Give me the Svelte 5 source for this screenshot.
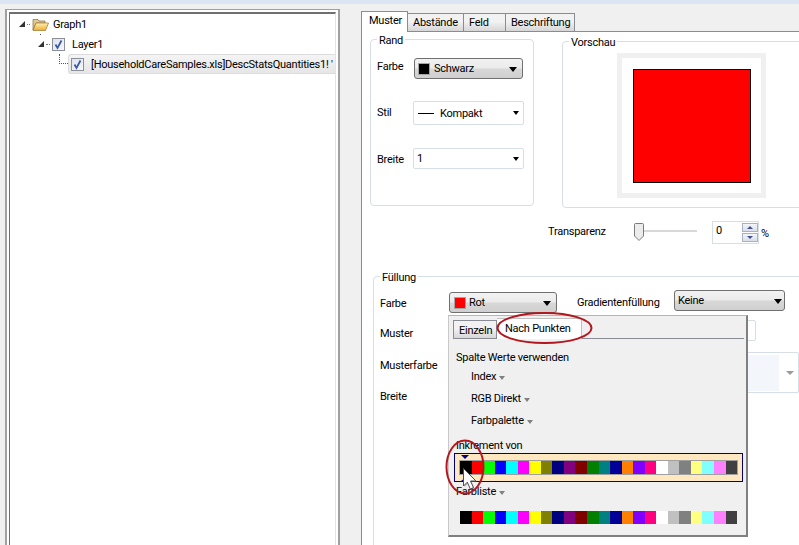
<script>
  const palette = ['#000000','#ff0000','#00ff00','#0000ff','#00ffff','#ff00ff','#ffff00','#808000','#000080','#800080','#800000','#008000','#008080','#000099','#ff8000','#8000ff','#ff0080','#ffffff','#c0c0c0','#808080','#ffff80','#80ffff','#ff80ff','#404040'];
</script>

<div class="app">
  <div class="strip"></div>
  <div class="main">
    <section class="tree-outer">
      <div class="tree">
        <i class="stub"></i>
        <div class="node n1">
          <svg class="exp" viewBox="0 0 6 6"><polygon points="6,0 6,6 0,6" fill="#333"/></svg>
          <span class="dots d1"></span>
          <svg class="folder" viewBox="0 0 17 13">
            <defs><linearGradient id="fg" x1="0" y1="0" x2="0" y2="1"><stop offset="0" stop-color="#fff2b0"/><stop offset="1" stop-color="#eeac34"/></linearGradient></defs>
            <path d="M1 12V1.500h5l1 1.500h6v2H4L1 12z" fill="#e3c98c" stroke="#8d7a55" stroke-width=".8"/>
            <path d="M1 12.500 4 5h12.500l-3 7.500z" fill="url(#fg)" stroke="#a5803a" stroke-width=".8"/>
          </svg>
          <span class="t1">Graph1</span>
        </div>
        <div class="node n2">
          <svg class="exp" viewBox="0 0 6 6"><polygon points="6,0 6,6 0,6" fill="#333"/></svg>
          <span class="dots d2"></span>
          <span class="cb"><svg viewBox="0 0 11 11"><path d="M2.500 5.500 4.500 9 8.500 1.500" fill="none" stroke="#3c5aa8" stroke-width="1.800"/></svg></span>
          <span class="t2">Layer1</span>
        </div>
        <div class="node n3">
          <span class="elbow"></span>
          <div class="selected">
            <span class="cb"><svg viewBox="0 0 11 11"><path d="M2.500 5.500 4.500 9 8.500 1.500" fill="none" stroke="#3c5aa8" stroke-width="1.800"/></svg></span>
            <span class="t3">[HouseholdCareSamples.xls]DescStatsQuantities1! '</span>
          </div>
        </div>
      </div>
    </section>

    <section class="right">
      <div class="tabs">
        <div class="tab active w1">Muster</div>
        <div class="tab w2">Abstände</div>
        <div class="tab w3">Feld</div>
        <div class="tab w4">Beschriftung</div>
      </div>
      <div class="page">
        <div class="top">
          <div class="group rand">
            <div class="legend">Rand</div>
            <div class="r r1"><span class="lab">Farbe</span>
              <div class="btn b-schwarz"><i class="sw black"></i><span>Schwarz</span><b class="arrow"></b></div></div>
            <div class="r r2"><span class="lab">Stil</span>
              <div class="combo c-stil"><i class="dash"></i><span>Kompakt</span><b class="arrow sm"></b></div></div>
            <div class="r r3"><span class="lab">Breite</span>
              <div class="combo c-breite"><span>1</span><b class="arrow sm"></b></div></div>
          </div>
          <div class="group vorschau">
            <div class="legend">Vorschau</div>
            <div class="frame"><div class="redbox"></div></div>
          </div>
        </div>

        <div class="trans">
          <span class="tlabel">Transparenz</span>
          <div class="slider"><i class="track"></i><svg class="thumb" viewBox="0 0 10 18"><path d="M.5 1.500Q.5.500 1.500.500h7q1 0 1 1V13L5 17.500.5 13z" fill="#ececec" stroke="#7b7b7b"/></svg></div>
          <div class="spin"><span>0</span><div class="spinbtns"><i class="up"></i><i class="down"></i></div></div>
          <span class="pct">%</span>
        </div>

        <div class="group fill">
          <div class="legend">Füllung</div>
          <div class="fr fr1">
            <span class="flab">Farbe</span>
            <div class="btn b-rot"><i class="sw red"></i><span>Rot</span><b class="arrow"></b></div>
            <span class="glab">Gradientenfüllung</span>
            <div class="btn b-keine"><span>Keine</span><b class="arrow"></b></div>
          </div>
          <div class="fr fr2"><span class="flab">Muster</span><div class="combo c-muster"></div></div>
          <div class="fr fr3"><span class="flab">Musterfarbe</span><div class="combo c-mf"><i class="mfi"></i><b class="arrow sm grey"></b></div></div>
          <div class="fr fr4"><span class="flab">Breite</span></div>
        </div>
      </div>
    </section>
  </div>

  <div class="popup">
    <div class="ptabs">
      <div class="ptab">Einzeln</div>
      <div class="ptab on">Nach Punkten</div>
    </div>
    <div class="pbody">
      <div class="ph">Spalte Werte verwenden</div>
      <div class="pi p1">Index<b class="arrow tiny"></b></div>
      <div class="pi p2">RGB Direkt<b class="arrow tiny"></b></div>
      <div class="pi p3">Farbpalette<b class="arrow tiny"></b></div>
      <div class="ph inc">Inkrement von</div>
      <div class="sel">
        <i class="mark top-m"></i>
        <div class="swatches framed">
          {#each palette as c}<i style="background:{c}"></i>{/each}
        </div>
        <i class="mark bot-m"></i>
      </div>
      <div class="ph fl">Farbliste<b class="arrow tiny"></b></div>
      <div class="swatches plain">
        {#each palette as c}<i style="background:{c}"></i>{/each}
      </div>
    </div>
  </div>

  <svg class="marks" viewBox="0 0 799 545" aria-hidden="true">
    <ellipse cx="544.500" cy="328" rx="47" ry="15" fill="none" stroke="#b4161e" stroke-width="2"/>
    <ellipse cx="465" cy="467" rx="18.500" ry="26.500" fill="none" stroke="#b4161e" stroke-width="2"/>
    <path d="M464.500 469.500V487l3.800-3.800 3 6.800 3.200-1.400-3-6.600h5.500z" fill="#666" opacity=".45"/>
    <path d="M463.500 468.500V486l3.800-3.800 3 6.800 3.200-1.400-3-6.600h5.500z" fill="#fff" stroke="#505050" stroke-width="1"/>
  </svg>
</div>

<style>
  :global(body) { margin: 0; }
  .app {
    position: relative; width: 799px; height: 545px; overflow: hidden;
    background: #f0f0f0; color: #000;
    font: 11px/15px Roboto, "Noto Sans", sans-serif; letter-spacing: -.25px;
  }
  .strip { height: 4px; background: #dce6f3; }
  .main { display: flex; align-items: flex-start; }
  i, b { display: block; }

  .tree-outer {
    margin: 5px 0 0 5px; width: 327px; height: 560px; flex: none;
    border: 1px solid #a0a0a0; border-width: 1px 2px 0 2px; background: #fff; padding: 2px 2px 0 2px;
  }
  .tree {
    position: relative;
    height: 100%; border: solid #6f6f6f; border-width: 2px 0 0 1px; border-right: 1px solid #e3e3e3;
    overflow: hidden; box-sizing: border-box;
  }
  .stub { position: absolute; left: 30px; top: 20px; width: 1px; height: 1px; background: #555; }
  .node { display: flex; align-items: center; white-space: nowrap; }
  .exp { width: 6px; height: 6px; flex: none; }
  .dots { height: 0; border-top: 1px dotted #777; flex: none; }
  .n1 { height: 20px; padding-left: 9px; }
  .n1 .dots { width: 3px; margin: 0 2px; }
  .folder { width: 17px; height: 13px; flex: none; }
  .t1 { margin-left: 4px; }
  .n2 { height: 20px; padding-left: 28px; }
  .n2 .dots { width: 4px; margin: 0 2px; }
  .cb {
    width: 11px; height: 11px; flex: none; border: 1px solid #8a8f98;
    background: linear-gradient(135deg, #dfe3ea, #f6f7f9); display: block;
  }
  .cb svg { display: block; width: 11px; height: 11px; }
  .t2 { margin-left: 7px; }
  .n3 { height: 20px; padding-left: 49px; align-items: stretch; }
  .elbow { width: 9px; height: 10px; border: dotted #555; border-width: 0 0 1px 1px; flex: none; box-sizing: border-box; }
  .selected {
    flex: 1; display: flex; align-items: center; padding-left: 2px; overflow: hidden;
    background: linear-gradient(#f4f4f4, #e6e6e6); border: 1px solid #dcdcdc; border-right: 0; border-radius: 3px 0 0 3px;
  }
  .t3 { margin-left: 7px; }

  .right { margin-left: 21px; width: 470px; flex: none; }
  .tabs { display: flex; height: 27px; box-sizing: border-box; padding-top: 7px; position: relative; z-index: 1; }
  .tab {
    box-sizing: border-box; height: 18px; margin-top: 2px; border: 1px solid #898c95; border-bottom: 0; border-left-width: 0;
    background: linear-gradient(#f2f2f2 45%, #d6d6d6); padding-left: 5px; line-height: 18px;
  }
  .tab.active { height: 21px; margin-top: 0; background: #fff; border-left-width: 1px; padding-left: 7px; line-height: 18px; }
  .w1 { width: 47px; } .w2 { width: 56px; } .w3 { width: 42px; } .w4 { width: 69px; }
  .page { border: solid #898c95; border-width: 1px 0 0 1px; background: #fff; height: 520px; box-sizing: border-box; padding: 7px 0 0 8px; }

  .top { display: flex; align-items: flex-start; }
  .group { border: 1px solid #d5dfe5; border-radius: 4px; box-sizing: border-box; }
  .legend { width: fit-content; height: 16px; margin: -8px 0 0 0; padding: 0 2px; background: #fff; line-height: 18px; }
  .rand { width: 164px; height: 167px; flex: none; padding-left: 6px; }
  .r { display: flex; align-items: center; }
  .lab { width: 36px; flex: none; }
  .r1 { height: 21px; margin-top: 10px; }
  .r1 .lab { margin-bottom: 4px; }
  .r2 { height: 24px; margin-top: 22px; }
  .r2 .lab { margin-bottom: 2px; }
  .r3 { height: 21px; margin-top: 23px; }
  .r3 .lab { margin-top: 2px; }

  .btn {
    box-sizing: border-box; height: 21px; display: flex; align-items: center; position: relative;
    border: 1px solid #707070; border-radius: 3px;
    background: linear-gradient(#f2f2f2 0, #ebebeb 48%, #d8d8d8 52%, #cfcfcf);
  }
  .combo {
    box-sizing: border-box; display: flex; align-items: center; position: relative;
    border: 1px solid #d5dfe5; border-radius: 2px; background: #fff;
  }
  .arrow { position: absolute; right: 5px; top: 50%; margin-top: -2px; width: 0; height: 0; border: 4.500px solid transparent; border-top: 5px solid #000; border-bottom: 0; }
  .arrow.sm { border-width: 4px 3.500px 0; right: 4px; border-top-color: #000; border-left-color: transparent; border-right-color: transparent; }
  .arrow.grey { border-top-color: #9a9a9a; border-width: 4px 4px 0; }
  .arrow.tiny { position: static; display: inline-block; margin: 0 0 0 3px; vertical-align: 0; border-width: 4px 3.500px 0; border-top-color: #808080; }
  .sw { box-sizing: border-box; width: 12px; height: 12px; flex: none; border: 1px solid #a5a5a5; }
  .sw.black { background: #000; }
  .sw.red { background: #f00; }
  .b-schwarz { width: 109px; margin-left: 1px; padding-left: 3px; }
  .b-schwarz span { margin-left: 4px; }
  .c-stil { width: 111px; height: 24px; padding-left: 4px; }
  .dash { width: 16px; height: 1px; background: #000; margin-right: 6px; }
  .c-breite { width: 111px; height: 21px; padding-left: 3px; }

  .vorschau { width: 300px; height: 167px; margin: 2px 0 0 28px; flex: none; padding-left: 54px; }
  .vorschau .legend { margin-left: -48px; }
  .frame { box-sizing: border-box; width: 149px; height: 145px; border: 5px solid #f0f0f0; padding: 11px 0 0 11px; margin-top: 3px; }
  .redbox { box-sizing: border-box; width: 118px; height: 114px; background: #f00; border: 1px solid #000; }

  .trans { display: flex; align-items: center; height: 24px; margin-top: 12px; padding-left: 178px; }
  .tlabel { width: 86px; flex: none; margin-bottom: 2px; }
  .slider { position: relative; width: 63px; height: 18px; flex: none; }
  .track { position: absolute; left: 6px; right: 0; top: 7px; height: 2px; background: #d8d8d8; }
  .thumb { position: absolute; left: 0; top: 0; width: 10px; height: 18px; }
  .spin {
    box-sizing: border-box; width: 47px; height: 23px; margin-left: 15px; border: 1px solid #d5dfe5; display: flex; justify-content: space-between; padding: 1px 0 1px 3px; line-height: 15px;
  }
  .spinbtns { width: 16px; display: flex; flex-direction: column; gap: 1px; }
  .spinbtns i { flex: 1; border: 1px solid #a9b2c0; background: linear-gradient(#f4f5f8, #d9deea); position: relative; }
  .spinbtns i::after { content: ""; position: absolute; left: 4px; top: 2px; border: 3px solid transparent; border-top: 0; border-bottom: 3px solid #46508a; }
  .spinbtns .down::after { border-bottom: 0; border-top: 3px solid #46508a; }
  .pct { margin-left: 2px; margin-top: 2px; }

  .fill { width: 500px; height: 300px; margin: 32px 0 0 3px; padding-left: 6px; }
  .fr { display: flex; align-items: flex-start; }
  .flab { width: 69px; flex: none; line-height: 18px; }
  .fr1 { height: 23px; }
  .fr1 .flab { margin-top: 10px; }
  .b-rot { width: 108px; margin-top: 7px; padding-left: 4px; }
  .b-rot span { margin-left: 3px; }
  .glab { margin: 10px 0 0 20px; width: 97px; flex: none; }
  .b-keine { width: 111px; margin-top: 5px; padding-left: 3px; }
  .b-keine .arrow { right: 2px; }
  .fr2 { height: 32px; margin-top: 12px; }
  .fr2 .flab { margin-top: 5px; }
  .c-muster { width: 307px; height: 21px; }
  .fr3 { height: 41px; }
  .fr3 .flab { margin-top: 5px; }
  .c-mf { width: 350px; height: 41px; flex: none; }
  .mfi { width: 329px; height: 36px; background: #f3f6fb; }
  .c-mf .arrow { right: 4px; }
  .fr4 { margin-top: -5px; }

  .popup {
    position: absolute; left: 448px; top: 315px; width: 300px; height: 222px; box-sizing: border-box;
    background: #f0f0f0; border: solid #808080; border-width: 1px 2px 2px 1px; border-left-color: #c9c9c9; border-top-color: #b5b5b5;
  }
  .ptabs { display: flex; align-items: flex-end; height: 23px; box-sizing: border-box; margin: 0 2px 0 4px; border-bottom: 1px solid #898c95; }
  .ptab { box-sizing: border-box; height: 18px; width: 44px; border: 1px solid #898c95; border-bottom: 0; padding-left: 5px; background: linear-gradient(#f2f2f2 45%, #d6d6d6); line-height: 19px; }
  .ptab.on { height: 21px; width: 85px; background: #fff; margin-bottom: -1px; border-left: 0; padding-left: 8px; border-color: #c0c0c0; line-height: 19px; }
  .pbody { padding-left: 7px; }
  .ph { line-height: 15px; }
  .pbody > .ph:first-child { margin-top: 11px; }
  .pi { padding-left: 15px; height: 15px; margin-top: 7px; }
  .p1 { margin-top: 4px; }
  .inc { margin-top: 10px; }
  .sel {
    position: relative; box-sizing: border-box; width: 289px; height: 29px; margin-left: -2px;
    background: #ffe8c0; border: 1px solid #000080; padding: 6px 0 0 4px;
  }
  .swatches { display: flex; }
  .swatches i { flex: 1; height: 100%; }
  .framed { width: 279px; height: 15px; border: 1px solid #a0a0a0; box-sizing: border-box; }
  .plain { width: 277px; height: 13px; margin: 12px 0 0 4px; }
  .mark { position: absolute; width: 0; height: 0; border: 4.500px solid transparent; }
  .top-m { left: 6px; top: 1px; border-top: 4px solid #000080; border-bottom: 0; }
  .bot-m { left: 6px; bottom: 0; border-bottom: 3px solid #000080; border-top: 0; }
  .fl { margin-top: 2px; }
  .marks { position: absolute; left: 0; top: 0; width: 799px; height: 545px; pointer-events: none; }
</style>
